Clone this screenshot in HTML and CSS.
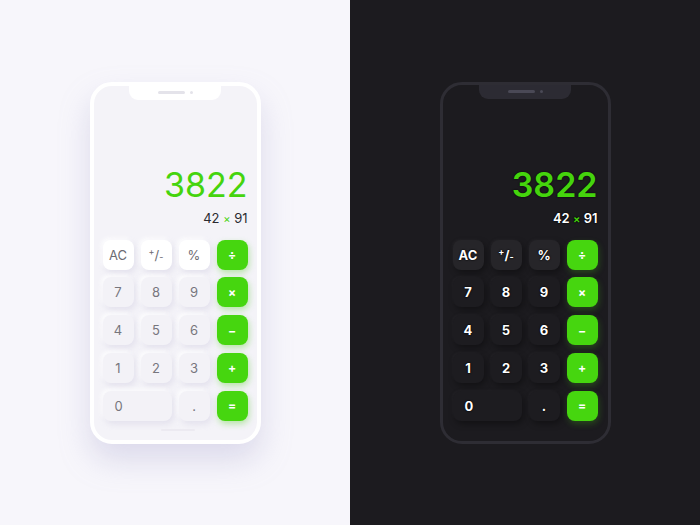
FILE: index.html
```html
<!DOCTYPE html>
<html lang="en">
<head>
<meta charset="utf-8">
<title>Calculator — light & dark</title>
<link rel="stylesheet" href="styles.css">
</head>
<body>
<main class="stage">
  <section class="half half--light">
    <div class="phone phone--light">
      <div class="notch"><span class="speaker"></span><span class="camera"></span></div>
      <div class="display">
        <div class="result">3822</div>
        <div class="expr">42 <span class="op">×</span> 91</div>
      </div>
      <div class="keys">
        <button class="key key--fn">AC</button>
        <button class="key key--fn"><sup>+</sup>/<sub>-</sub></button>
        <button class="key key--fn">%</button>
        <button class="key key--op">÷</button>
        <button class="key">7</button>
        <button class="key">8</button>
        <button class="key">9</button>
        <button class="key key--op">×</button>
        <button class="key">4</button>
        <button class="key">5</button>
        <button class="key">6</button>
        <button class="key key--op">−</button>
        <button class="key">1</button>
        <button class="key">2</button>
        <button class="key">3</button>
        <button class="key key--op">+</button>
        <button class="key key--zero">0</button>
        <button class="key">.</button>
        <button class="key key--op">=</button>
      </div>
      <div class="home"></div>
    </div>
  </section>
  <section class="half half--dark">
    <div class="phone phone--dark">
      <div class="notch"><span class="speaker"></span><span class="camera"></span></div>
      <div class="display">
        <div class="result">3822</div>
        <div class="expr">42 <span class="op">×</span> 91</div>
      </div>
      <div class="keys">
        <button class="key key--fn">AC</button>
        <button class="key key--fn"><sup>+</sup>/<sub>-</sub></button>
        <button class="key key--fn">%</button>
        <button class="key key--op">÷</button>
        <button class="key">7</button>
        <button class="key">8</button>
        <button class="key">9</button>
        <button class="key key--op">×</button>
        <button class="key">4</button>
        <button class="key">5</button>
        <button class="key">6</button>
        <button class="key key--op">−</button>
        <button class="key">1</button>
        <button class="key">2</button>
        <button class="key">3</button>
        <button class="key key--op">+</button>
        <button class="key key--zero">0</button>
        <button class="key">.</button>
        <button class="key key--op">=</button>
      </div>
    </div>
  </section>
</main>
</body>
</html>
```
FILE: styles.css
```css
* { box-sizing: border-box; }

html, body {
  margin: 0;
  height: 100%;
}

body {
  font-family: Inter, "Noto Sans", sans-serif;
}

.stage {
  display: flex;
  width: 700px;
  height: 525px;
}

.half {
  flex: 0 0 350px;
  display: flex;
  align-items: center;
  justify-content: center;
}

.half--light { background: #f7f6fb; }
.half--dark  { background: #1c1b1f; }

/* phone body */
.phone {
  position: relative;
  width: 171px;
  height: 362px;
  border-radius: 22px;
  display: flex;
  flex-direction: column;
  padding: 0 9px 19px 9px;
}

.phone--light {
  background: #f4f3f8;
  border: 4px solid #ffffff;
  box-shadow: 0 16px 30px rgba(170, 165, 205, 0.35);
}

.phone--dark {
  background: #1c1b1f;
  border: 3px solid #2e2d34;
  padding: 0 10px 20px 10px;
}

.notch {
  position: absolute;
  top: 0;
  left: 35px;
  width: 92px;
  height: 14px;
  border-radius: 0 0 9px 9px;
  display: flex;
  align-items: center;
  justify-content: center;
  gap: 5px;
  padding-left: 2px;
}

.speaker {
  width: 27px;
  height: 3px;
  border-radius: 2px;
}

.camera {
  width: 3px;
  height: 3px;
  border-radius: 50%;
}

.phone--light .notch { background: #ffffff; }
.phone--light .speaker,
.phone--light .camera { background: #e4e3ea; }

.phone--dark .notch { left: 36px; background: #2c2b33; }
.phone--dark .speaker,
.phone--dark .camera { background: #4a4956; }

/* display */
.display {
  flex: 1;
  display: flex;
  flex-direction: column;
  align-items: flex-end;
  justify-content: flex-end;
  padding-bottom: 13px;
}

.result {
  font-size: 34px;
  line-height: 40px;
  color: #45d40d;
  margin-bottom: 5px;
}

.expr {
  font-size: 13px;
  line-height: 16px;
}

.expr .op {
  color: #45d40d;
  font-size: 11px;
}

.phone--light .expr { color: #2a2a30; }

.phone--dark .result { font-weight: 600; text-shadow: 0 0 2px #000; }
.phone--dark .expr { color: #ffffff; font-weight: 600; text-shadow: 0 0 2px #000, 0 0 1px #000; }

/* keypad */
.keys {
  display: grid;
  grid-template-columns: repeat(4, 31px);
  grid-auto-rows: 30px;
  column-gap: 7px;
  row-gap: 7.75px;
  justify-content: center;
}

.key {
  border: 0;
  border-radius: 8px;
  font-family: inherit;
  font-size: 13px;
  padding: 0;
  display: flex;
  align-items: center;
  justify-content: center;
}

.key--zero {
  grid-column: span 2;
  justify-content: flex-start;
  padding-left: 12px;
}

/* raised plus, lowered minus in the sign toggle */
.key sup, .key sub {
  font-size: 9px;
  line-height: 0;
}
.key sup { position: relative; top: -3px; }
.key sub { position: relative; top: 2px; }

.key--op {
  background: #46d60f;
  color: #ffffff;
  font-weight: 700;
  font-size: 12px;
}

/* light keys */
.phone--light .key {
  background: #f3f2f7;
  color: #77767d;
  box-shadow: 2px 3px 6px rgba(200, 197, 220, 0.4), -2px -2px 4px rgba(255, 255, 255, 0.9);
}
.phone--light .key--fn {
  background: #ffffff;
  color: #6c6b72;
}
.phone--light .key--op {
  background: #46d60f;
  color: #ffffff;
  box-shadow: 1px 3px 6px rgba(70, 200, 20, 0.35);
}

/* dark keys */
.phone--dark .key {
  background: #1d1c20;
  color: #ffffff;
  font-weight: 700;
  text-shadow: 0 0 2px #000, 0 0 1px #000;
  box-shadow: 2px 3px 6px rgba(0, 0, 0, 0.35), -1px -1px 3px rgba(255, 255, 255, 0.03);
}
.phone--dark .key--fn {
  background: #262529;
}
.phone--dark .key--op {
  background: #46d60f;
  text-shadow: none;
  box-shadow: 1px 3px 6px rgba(70, 200, 20, 0.25);
}

.home {
  position: absolute;
  bottom: 9px;
  left: 67px;
  width: 34px;
  height: 2px;
  border-radius: 1px;
  background: #eceaf1;
}
```
